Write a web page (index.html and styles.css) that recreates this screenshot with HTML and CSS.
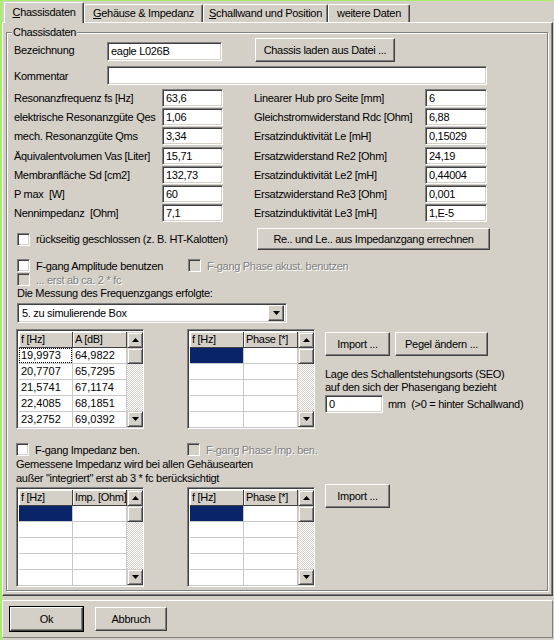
FILE: index.html
```html
<!DOCTYPE html>
<html lang="de">
<head>
<meta charset="utf-8">
<title>Chassisdaten</title>
<link rel="stylesheet" href="styles.css">
</head>
<body>
<div class="window">
  <div class="tabs">
    <div class="tab active t1"><u>C</u>hassisdaten</div>
    <div class="tab t2"><u>G</u>ehäuse &amp; Impedanz</div>
    <div class="tab t3"><u>S</u>challwand und Position</div>
    <div class="tab t4">weitere Daten</div>
  </div>
  <div class="panel">
    <div class="group">
      <div class="legend">Chassisdaten</div>

      <div class="row r-name">
        <span class="lbl w-head">Bezeichnung</span>
        <div class="edit e-name">eagle L026B</div>
        <div class="btn b-load">Chassis laden aus Datei ...</div>
      </div>

      <div class="row r-comment">
        <span class="lbl w-head">Kommentar</span>
        <div class="edit e-comment"></div>
      </div>

      <div class="params">
        <span class="lbl">Resonanzfrequenz fs [Hz]</span><div class="edit">63,6</div>
        <span></span>
        <span class="lbl">Linearer Hub pro Seite [mm]</span><div class="edit">6</div>

        <span class="lbl">elektrische Resonanzgüte Qes</span><div class="edit">1,06</div>
        <span></span>
        <span class="lbl">Gleichstromwiderstand Rdc [Ohm]</span><div class="edit">6,88</div>

        <span class="lbl">mech. Resonanzgüte Qms</span><div class="edit">3,34</div>
        <span></span>
        <span class="lbl">Ersatzinduktivität Le [mH]</span><div class="edit">0,15029</div>

        <span class="lbl">Äquivalentvolumen Vas [Liter]</span><div class="edit">15,71</div>
        <span></span>
        <span class="lbl">Ersatzwiderstand Re2 [Ohm]</span><div class="edit">24,19</div>

        <span class="lbl">Membranfläche Sd [cm2]</span><div class="edit">132,73</div>
        <span></span>
        <span class="lbl">Ersatzinduktivität Le2 [mH]</span><div class="edit">0,44004</div>

        <span class="lbl">P max&nbsp; [W]</span><div class="edit">60</div>
        <span></span>
        <span class="lbl">Ersatzwiderstand Re3 [Ohm]</span><div class="edit">0,001</div>

        <span class="lbl">Nennimpedanz&nbsp; [Ohm]</span><div class="edit">7,1</div>
        <span></span>
        <span class="lbl">Ersatzinduktivität Le3 [mH]</span><div class="edit">1,E-5</div>
      </div>

      <div class="row r-closed">
        <div class="check c-closed"><span class="box"></span><span>rückseitig geschlossen (z. B. HT-Kalotten)</span></div>
        <div class="btn b-calc">Re.. und Le.. aus Impedanzgang errechnen</div>
      </div>

      <div class="row r-amp">
        <div class="check c-first"><span class="box"></span><span>F-gang Amplitude benutzen</span></div>
        <div class="check disabled"><span class="box"></span><span>F-gang Phase akust. benutzen</span></div>
      </div>
      <div class="row r-fc">
        <div class="check disabled"><span class="box"></span><span>... erst ab ca. 2 * fc</span></div>
      </div>
      <div class="text t-messung">Die Messung des Frequenzgangs erfolgte:</div>
      <div class="combo">
        <span class="combo-text">5. zu simulierende Box</span>
        <span class="combo-btn"><svg width="7" height="4" viewBox="0 0 7 4"><polygon points="0,0 7,0 3.5,4" fill="#000"/></svg></span>
      </div>

      <div class="grids g-top">
        <div class="sgrid">
          <div class="cells">
            <div class="hdr">f [Hz]</div><div class="hdr">A [dB]</div>
            <div class="cell"><span class="focus">19,9973</span></div><div class="cell">64,9822</div>
            <div class="cell">20,7707</div><div class="cell">65,7295</div>
            <div class="cell">21,5741</div><div class="cell">67,1174</div>
            <div class="cell">22,4085</div><div class="cell">68,1851</div>
            <div class="cell">23,2752</div><div class="cell">69,0392</div>
          </div>
          <div class="vscroll">
            <div class="sbtn"><svg width="7" height="4" viewBox="0 0 7 4"><polygon points="0,4 7,4 3.5,0" fill="#000"/></svg></div>
            <div class="thumb"></div>
            <div class="track"></div>
            <div class="sbtn"><svg width="7" height="4" viewBox="0 0 7 4"><polygon points="0,0 7,0 3.5,4" fill="#000"/></svg></div>
          </div>
        </div>
        <div class="sgrid">
          <div class="cells">
            <div class="hdr">f [Hz]</div><div class="hdr">Phase [*]</div>
            <div class="cell sel"></div><div class="cell"></div>
            <div class="cell"></div><div class="cell"></div>
            <div class="cell"></div><div class="cell"></div>
            <div class="cell"></div><div class="cell"></div>
            <div class="cell"></div><div class="cell"></div>
          </div>
          <div class="vscroll">
            <div class="sbtn"><svg width="7" height="4" viewBox="0 0 7 4"><polygon points="0,4 7,4 3.5,0" fill="#000"/></svg></div>
            <div class="thumb"></div>
            <div class="track"></div>
            <div class="sbtn"><svg width="7" height="4" viewBox="0 0 7 4"><polygon points="0,0 7,0 3.5,4" fill="#000"/></svg></div>
          </div>
        </div>
        <div class="side">
          <div class="btnrow">
            <div class="btn b-import">Import ...</div>
            <div class="btn b-pegel">Pegel ändern ...</div>
          </div>
          <div class="text t-seo">Lage des Schallentstehungsorts (SEO)<br>auf den sich der Phasengang bezieht</div>
          <div class="row r-seo">
            <div class="edit e-seo">0</div>
            <span class="lbl">mm&nbsp; (&gt;0 = hinter Schallwand)</span>
          </div>
        </div>
      </div>

      <div class="row r-imp">
        <div class="check c-first"><span class="box"></span><span>F-gang Impedanz ben.</span></div>
        <div class="check disabled"><span class="box"></span><span>F-gang Phase Imp. ben.</span></div>
      </div>
      <div class="text t-imp">Gemessene Impedanz wird bei allen Gehäusearten<br>außer "integriert" erst ab 3 * fc berücksichtigt</div>

      <div class="grids g-bottom">
        <div class="sgrid">
          <div class="cells">
            <div class="hdr">f [Hz]</div><div class="hdr">Imp. [Ohm]</div>
            <div class="cell sel"></div><div class="cell"></div>
            <div class="cell"></div><div class="cell"></div>
            <div class="cell"></div><div class="cell"></div>
            <div class="cell"></div><div class="cell"></div>
            <div class="cell"></div><div class="cell"></div>
          </div>
          <div class="vscroll">
            <div class="sbtn"><svg width="7" height="4" viewBox="0 0 7 4"><polygon points="0,4 7,4 3.5,0" fill="#000"/></svg></div>
            <div class="thumb"></div>
            <div class="track"></div>
            <div class="sbtn"><svg width="7" height="4" viewBox="0 0 7 4"><polygon points="0,0 7,0 3.5,4" fill="#000"/></svg></div>
          </div>
        </div>
        <div class="sgrid">
          <div class="cells">
            <div class="hdr">f [Hz]</div><div class="hdr">Phase [*]</div>
            <div class="cell sel"></div><div class="cell"></div>
            <div class="cell"></div><div class="cell"></div>
            <div class="cell"></div><div class="cell"></div>
            <div class="cell"></div><div class="cell"></div>
            <div class="cell"></div><div class="cell"></div>
          </div>
          <div class="vscroll">
            <div class="sbtn"><svg width="7" height="4" viewBox="0 0 7 4"><polygon points="0,4 7,4 3.5,0" fill="#000"/></svg></div>
            <div class="thumb"></div>
            <div class="track"></div>
            <div class="sbtn"><svg width="7" height="4" viewBox="0 0 7 4"><polygon points="0,0 7,0 3.5,4" fill="#000"/></svg></div>
          </div>
        </div>
        <div class="side">
          <div class="btn b-import b-import2">Import ...</div>
        </div>
      </div>
    </div>
  </div>
  <div class="footer">
    <div class="btn b-ok">Ok</div>
    <div class="btn b-cancel">Abbruch</div>
  </div>
</div>
</body>
</html>
```

FILE: styles.css
```css
* { box-sizing: border-box; }
html, body { margin: 0; padding: 0; }
body {
  width: 554px;
  height: 640px;
  overflow: hidden;
  background: #D4D0C8;
  font-family: "Liberation Sans", Arial, sans-serif;
  font-size: 11px;
  letter-spacing: -0.3px;
  color: #000;
}
.window {
  height: 640px;
  border-top: 1px solid #A8EC6C;
  border-left: 2px solid #A8EC6C;
}

/* tabs */
.tabs {
  display: flex;
  align-items: flex-end;
  height: 21px;
  padding-left: 2px;
  position: relative;
  z-index: 2;
}
.tab {
  height: 18px;
  line-height: 16px;
  text-align: center;
  white-space: nowrap;
  background: #D4D0C8;
  border: 1px solid #fff;
  border-bottom: none;
  border-right-color: #404040;
  box-shadow: inset -1px 0 0 #808080;
  border-radius: 2px 2px 0 0;
}
.tab u { text-decoration: underline; text-underline-offset: 1px; }
.tab.active {
  height: 21px;
  margin-bottom: -1px;
  line-height: 19px;
}
.t1 { width: 80px; }
.t2 { width: 119px; }
.t3 { width: 125px; }
.t4 { width: 82px; }

/* panel */
.panel {
  width: 551px;
  height: 574px;
  border: 1px solid #fff;
  border-right-color: #404040;
  border-bottom-color: #404040;
  box-shadow: inset -1px -1px 0 #808080;
  padding: 9px 0 0 3px;
}
.group {
  position: relative;
  width: 542px;
  height: 559px;
  border: 1px solid #808080;
  box-shadow: inset 1px 1px 0 #fff, 1px 1px 0 #fff;
  padding: 5px 0 0 7px;
}
.legend {
  position: absolute;
  left: 5px;
  top: -8px;
  padding: 0 1px;
  line-height: 14px;
  background: #D4D0C8;
}

/* common controls */
.row { display: flex; align-items: center; }
.lbl { white-space: nowrap; }
.text { line-height: 14px; white-space: nowrap; }
.edit {
  height: 18px;
  background: #fff;
  border: 1px solid #808080;
  border-right-color: #fff;
  border-bottom-color: #fff;
  box-shadow: inset 1px 1px 0 #404040, inset -1px -1px 0 #D4D0C8;
  padding: 0 0 0 3px;
  line-height: 16px;
  white-space: nowrap;
  overflow: hidden;
}
.btn {
  display: flex;
  align-items: center;
  justify-content: center;
  background: #D4D0C8;
  border: 1px solid #fff;
  border-right-color: #404040;
  border-bottom-color: #404040;
  box-shadow: inset -1px -1px 0 #808080;
  white-space: nowrap;
}
.check { display: flex; align-items: center; height: 13px; white-space: nowrap; }
.check .box {
  width: 13px;
  height: 13px;
  margin-right: 6px;
  background: #fff;
  border: 1px solid #808080;
  border-right-color: #fff;
  border-bottom-color: #fff;
  box-shadow: inset 1px 1px 0 #404040, inset -1px -1px 0 #D4D0C8;
  flex: none;
}
.check.disabled { color: #808080; text-shadow: 1px 1px 0 #fff; }
.check.disabled .box { background: #D4D0C8; }

/* first rows */
.w-head { width: 93px; flex: none; }
.r-name { height: 24px; }
.e-name { width: 115px; height: 19px; line-height: 17px; margin-top: 3px; }
.b-load { width: 140px; height: 24px; margin-left: 33px; }
.r-comment { margin-top: 4px; height: 19px; }
.e-comment { width: 380px; height: 19px; line-height: 17px; }

.params {
  display: grid;
  grid-template-columns: 148px 61px 31px 171px 62px;
  grid-auto-rows: 19.3px;
  align-items: center;
  margin-top: 3px;
}
.params .edit { height: 18px; }

.r-closed { margin-top: 5px; height: 22px; }
.c-closed { width: 240px; margin-left: 3px; }
.b-calc { width: 233px; height: 22px; }

.r-amp { margin-top: 9px; }
.c-first { width: 171px; margin-left: 3px; }
.r-fc { margin-top: 1px; margin-left: 3px; }
.t-messung { margin-top: 0; margin-left: 3px; }

.combo {
  display: flex;
  align-items: center;
  width: 270px;
  height: 20px;
  margin: 3px 0 0 3px;
  background: #fff;
  border: 1px solid #808080;
  border-right-color: #fff;
  border-bottom-color: #fff;
  box-shadow: inset 1px 1px 0 #404040, inset -1px -1px 0 #D4D0C8;
  padding: 2px;
}
.combo-text { flex: 1; padding-left: 2px; line-height: 16px; }
.combo-btn {
  width: 16px;
  height: 16px;
  display: flex;
  align-items: center;
  justify-content: center;
  background: #D4D0C8;
  border: 1px solid #fff;
  border-right-color: #404040;
  border-bottom-color: #404040;
  box-shadow: inset -1px -1px 0 #808080;
}

/* grids */
.grids { display: flex; align-items: flex-start; margin-left: 2px; }
.g-top { margin-top: 6px; }
.g-bottom { margin-top: 2px; }
.sgrid {
  display: flex;
  width: 128px;
  height: 100px;
  margin-right: 43px;
  background: #fff;
  border: 1px solid #808080;
  border-right-color: #fff;
  border-bottom-color: #fff;
  box-shadow: inset 1px 1px 0 #404040, inset -1px -1px 0 #D4D0C8;
  padding: 2px 1px 1px 2px;
}
.sgrid + .sgrid { margin-right: 10px; }
.cells {
  display: grid;
  grid-template-columns: 54px 54px;
  grid-auto-rows: 16px;
  width: 108px;
  align-content: start;
}
.hdr {
  background: #D4D0C8;
  border-right: 1px solid #404040;
  border-bottom: 1px solid #404040;
  box-shadow: inset 1px 1px 0 #fff;
  padding-left: 2px;
  line-height: 15px;
  white-space: nowrap;
  overflow: hidden;
}
.cell {
  border-right: 1px solid #C8C8C8;
  border-bottom: 1px solid #C8C8C8;
  padding-left: 2px;
  line-height: 15px;
  letter-spacing: 0;
}
.cell.sel { background: #0A246A; }
.focus { display: block; margin-left: -2px; padding-left: 1px; border: 1px dotted #000; height: 15px; line-height: 13px; }

.vscroll { width: 16px; display: flex; flex-direction: column; }
.sbtn, .thumb {
  width: 16px;
  height: 16px;
  display: flex;
  align-items: center;
  justify-content: center;
  background: #D4D0C8;
  border: 1px solid #D4D0C8;
  border-right-color: #404040;
  border-bottom-color: #404040;
  box-shadow: inset 1px 1px 0 #fff, inset -1px -1px 0 #808080;
  flex: none;
}
.track {
  flex: 1;
  background: repeating-conic-gradient(#fff 0 25%, #D4D0C8 0 50%) 0 0 / 2px 2px;
}

.side { display: flex; flex-direction: column; }
.btnrow { display: flex; margin-top: 3px; }
.b-import { width: 65px; height: 24px; }
.b-pegel { width: 93px; height: 24px; margin-left: 5px; }
.t-seo { margin-top: 12px; line-height: 13px; }
.r-seo { margin-top: 1px; }
.e-seo { width: 58px; height: 18px; margin-right: 5px; }
.b-import2 { margin-top: -3px; }

.r-imp { margin-top: 14px; }
.r-imp .c-first { margin-left: 2px; width: 171px; }
.t-imp { margin-top: 1px; margin-left: 2px; }

/* footer */
.footer {
  display: flex;
  width: 551px;
  height: 38px;
  margin-top: 4px;
  border: 1px solid #fff;
  border-right-color: #808080;
  border-bottom-color: #808080;
  padding: 6px 0 0 7px;
}
.b-ok {
  width: 73px;
  height: 24px;
  outline: 1px solid #000;
  outline-offset: 0;
}
.b-cancel { width: 72px; height: 24px; margin-left: 12px; }
```
